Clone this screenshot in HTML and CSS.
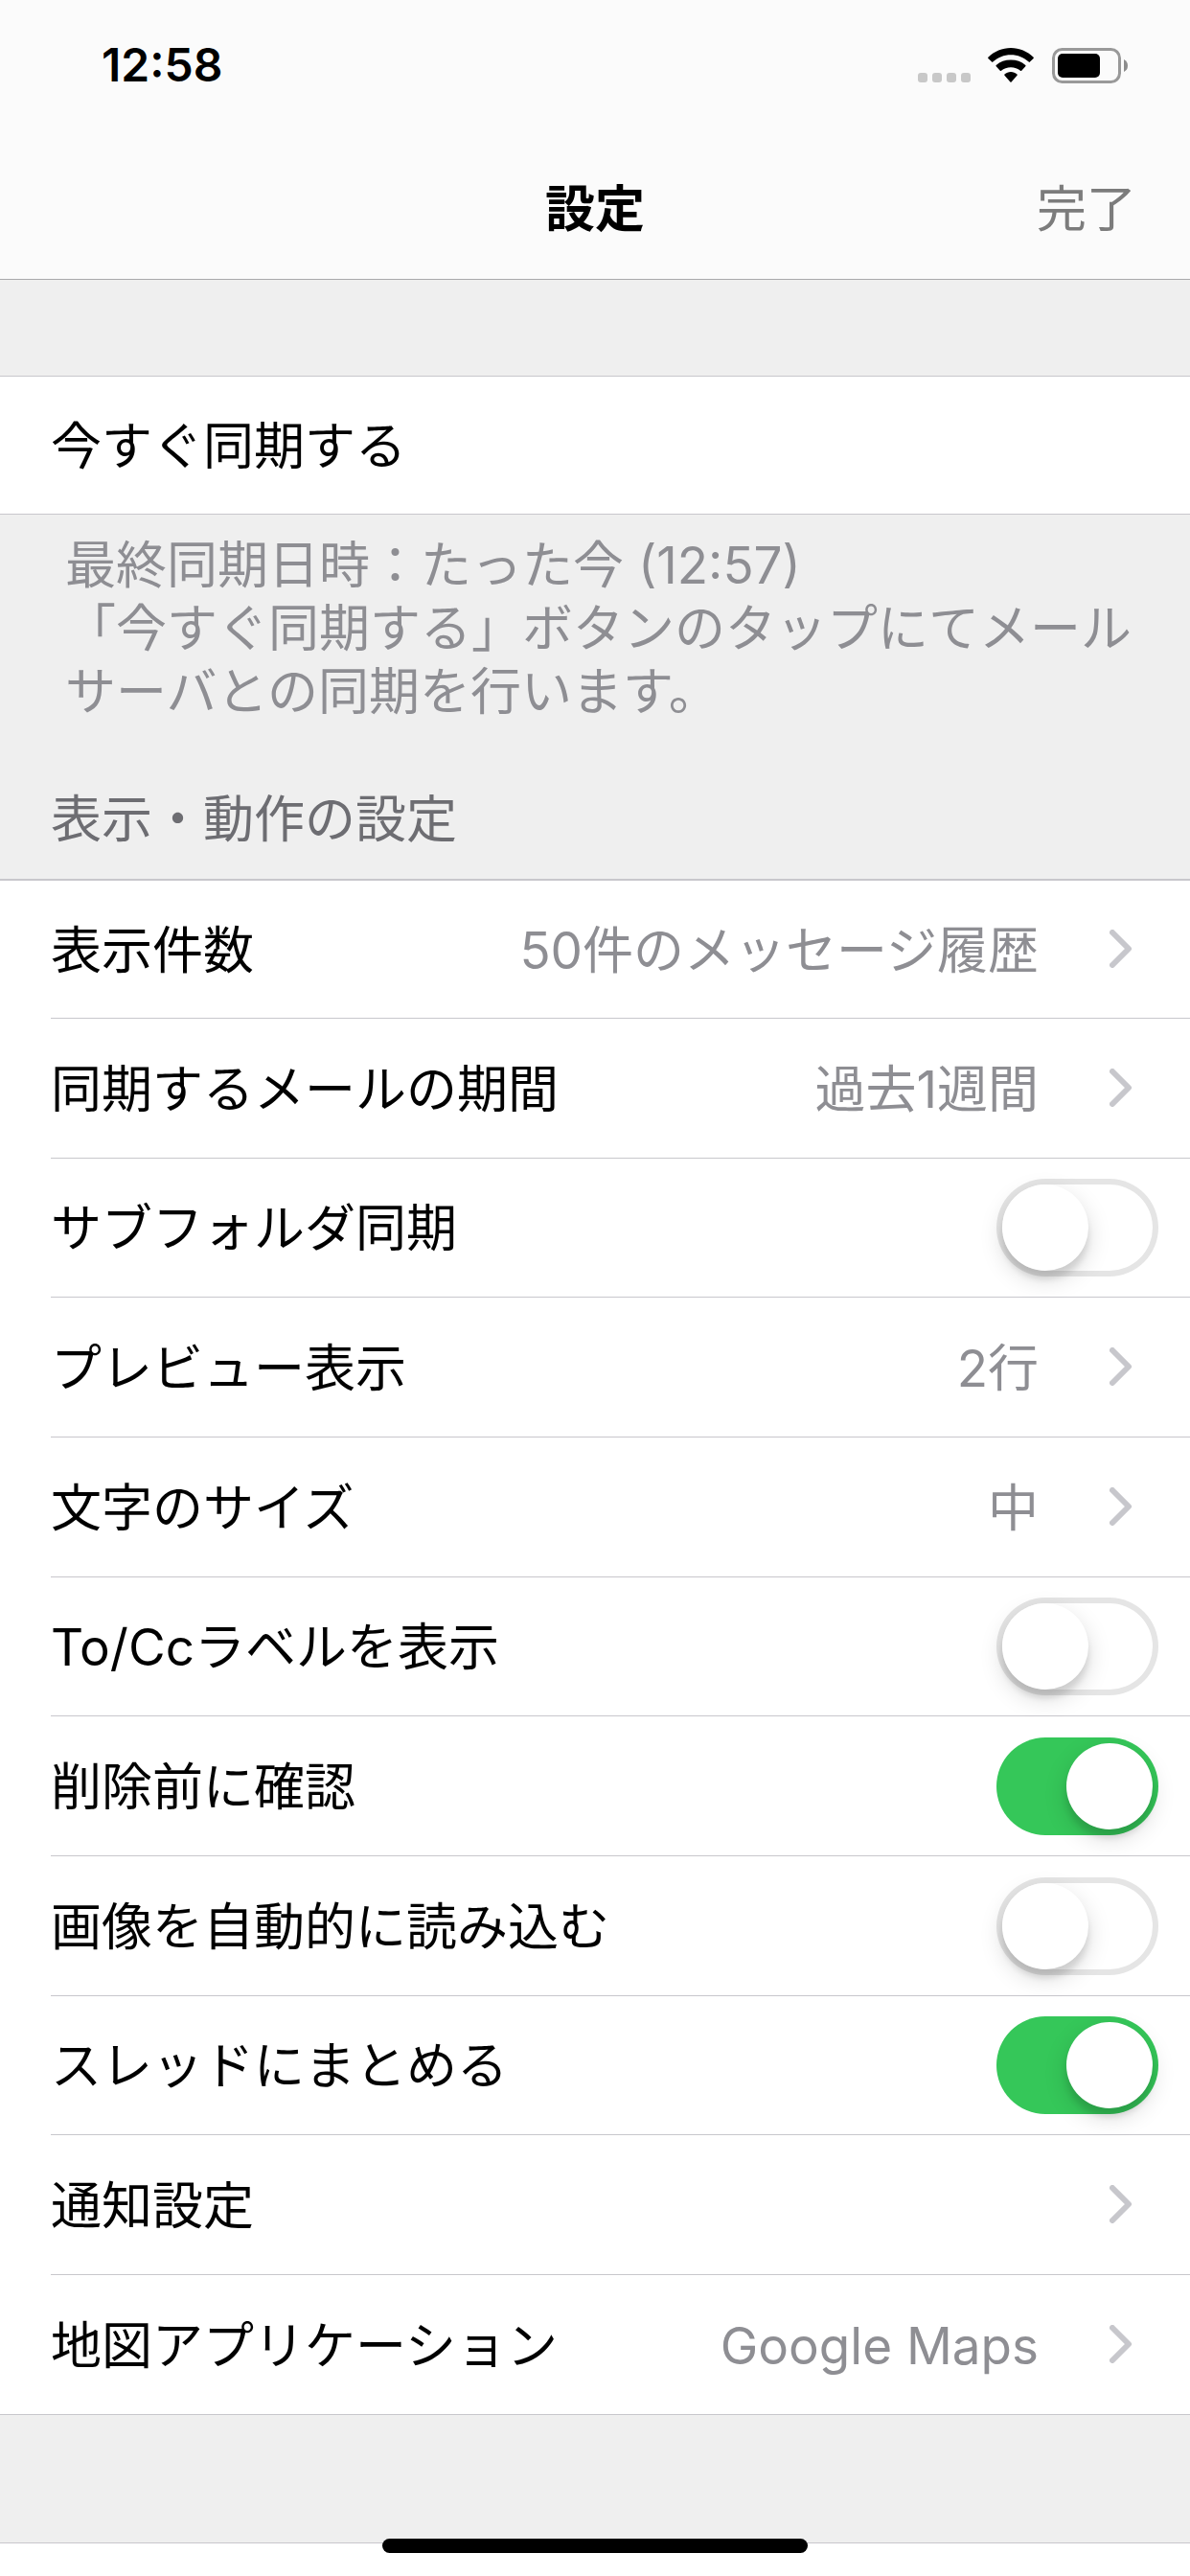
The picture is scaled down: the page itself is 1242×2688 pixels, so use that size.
FILE: index.html
```html
<!DOCTYPE html>
<html lang="ja">
<head>
    <meta charset="UTF-8">
    <meta name="viewport" content="width=device-width, initial-scale=1.0">
    <title>設定</title>
    <link rel="stylesheet" href="styles.css">
</head>
<body>

    <header class="top">
        <div class="status-bar">
            <span class="time">12:58</span>
            <div class="status-icons">
                <svg class="signal" viewBox="0 0 55 10"><rect width="10" height="10" rx="3"/><rect x="15" width="10" height="10" rx="3"/><rect x="30" width="10" height="10" rx="3"/><rect x="45" width="10" height="10" rx="3"/></svg>
                <svg class="wifi" viewBox="0 0 48 36">
                    <path d="M.4 10.9Q-.2 10.3.4 9.7C6.8 3.500 15 0 24 0s17.200 3.500 23.600 9.700q.6.600 0 1.200l-3.700 3.700q-.6.600-1.200 0C37.700 9.900 31.100 7.300 24 7.300S10.300 9.900 5.300 14.600q-.6.600-1.200 0z"/>
                    <path d="M8.700 19.200q-.6-.6 0-1.200C12.800 14.400 18.200 12.600 24 12.600s11.200 1.800 15.300 5.400q.6.600 0 1.200l-4.100 4.500q-.6.600-1.200.1C31.300 21.500 27.800 20.200 24 20.200s-7.300 1.300-10 3.600q-.6.500-1.200-.1z"/>
                    <path d="M17.500 28.700q-.6-.6 0-1.200C19.300 25.900 21.500 25 24 25s4.700.9 6.500 2.500q.6.600 0 1.200l-5.900 6.900q-.6.500-1.200 0z"/>
                </svg>
                <svg class="battery" viewBox="0 0 80 37">
                    <rect x="1.500" y="1.500" width="69" height="34" rx="9" fill="none" stroke="#999" stroke-width="3"/>
                    <rect x="6" y="6" width="44" height="25" rx="5"/>
                    <path d="M75 12q4 2 4 6.500T75 25z" fill="#8c8c8c"/>
                </svg>
            </div>
        </div>
        <div class="nav-bar">
            <h1>設定</h1>
            <button class="done" type="button">完了</button>
        </div>
    </header>

    <main>
        <section class="sync">
            <button class="sync-button" type="button">今すぐ同期する</button>
            <p class="note">最終同期日時：たった今 (12:57)<br>「今すぐ同期する」ボタンのタップにてメールサーバとの同期を行います。</p>
        </section>

        <section>
            <h2>表示・動作の設定</h2>
            <ul class="list">
                <li><a class="row" href="#count"><span>表示件数</span><span class="value">50件のメッセージ履歴</span><svg class="chevron" viewBox="0 0 24 40"><path d="M3 3l17 17L3 37"/></svg></a></li>
                <li><a class="row" href="#period"><span>同期するメールの期間</span><span class="value">過去1週間</span><svg class="chevron" viewBox="0 0 24 40"><path d="M3 3l17 17L3 37"/></svg></a></li>
                <li><label class="row"><span>サブフォルダ同期</span><input class="switch" type="checkbox"></label></li>
                <li><a class="row" href="#preview"><span>プレビュー表示</span><span class="value">2行</span><svg class="chevron" viewBox="0 0 24 40"><path d="M3 3l17 17L3 37"/></svg></a></li>
                <li><a class="row" href="#size"><span>文字のサイズ</span><span class="value">中</span><svg class="chevron" viewBox="0 0 24 40"><path d="M3 3l17 17L3 37"/></svg></a></li>
                <li><label class="row"><span>To/Ccラベルを表示</span><input class="switch" type="checkbox"></label></li>
                <li><label class="row"><span>削除前に確認</span><input class="switch" type="checkbox" checked></label></li>
                <li><label class="row"><span>画像を自動的に読み込む</span><input class="switch" type="checkbox"></label></li>
                <li><label class="row"><span>スレッドにまとめる</span><input class="switch" type="checkbox" checked></label></li>
                <li><a class="row" href="#notifications"><span>通知設定</span><svg class="chevron" viewBox="0 0 24 40"><path d="M3 3l17 17L3 37"/></svg></a></li>
                <li><a class="row" href="#maps"><span>地図アプリケーション</span><span class="value">Google Maps</span><svg class="chevron" viewBox="0 0 24 40"><path d="M3 3l17 17L3 37"/></svg></a></li>
            </ul>
        </section>

        <section class="next-section"></section>
    </main>

    <div class="home-indicator"></div>

</body>
</html>
```

FILE: styles.css
```css
:root {
    --bg: #efefef;
    --line: #c8c7cc;
    --gray: #8e8e93;
    --green: #35c759;
}

* { box-sizing: border-box; }

body {
    margin: 0;
    min-height: 100vh;
    display: flex;
    flex-direction: column;
    background: var(--bg);
    color: #000;
    font-family: Inter, "Noto Sans CJK JP", sans-serif;
    font-size: 53px;
    font-weight: 400;
    line-height: 66px;
}

button {
    font: inherit;
    color: inherit;
    background: none;
    border: 0;
    padding: 0;
    cursor: pointer;
}

/* ---- header ---- */
.top {
    background: #fbfbfb;
    border-bottom: 1px solid #a9a9ab;
}

.status-bar {
    height: 144px;
    padding: 0 64px 8px 106px;
    display: flex;
    justify-content: space-between;
    align-items: center;
}
.time { font-size: 48px; font-weight: 600; }
.status-icons { display: flex; align-items: center; }
.status-icons svg { display: block; }
.signal { width: 55px; height: 10px; margin: 26px 18px 0 0; fill: #c8c8c8; }
.wifi { width: 48px; height: 36px; margin-right: 19px; }
.battery { width: 80px; height: 37px; }

.nav-bar {
    height: 147px;
    padding: 2px 56px 0;
    display: grid;
    grid-template-columns: 1fr auto 1fr;
    align-items: center;
}
.nav-bar h1 { grid-column: 2; margin: 0; font-size: 52px; font-weight: 700; }
.done { justify-self: end; font-size: 52px; color: #7c7c7c; }

/* ---- body ---- */
main { flex: 1; display: flex; flex-direction: column; }

.sync { padding-top: 100px; }
.sync-button {
    display: block;
    width: 100%;
    height: 145px;
    padding: 2px 0 0 53px;
    background: #fff;
    border-top: 1px solid var(--line);
    border-bottom: 1px solid var(--line);
    text-align: left;
}

.note { margin: 0; padding: 20px 53px 0 68px; color: var(--gray); }

h2 {
    margin: 67px 0 29px;
    padding: 0 53px;
    font-size: inherit;
    font-weight: inherit;
    color: #6d6d72;
}

.list {
    margin: 0;
    padding: 0;
    list-style: none;
    background: #fff;
    border-top: 2px solid var(--line);
    border-bottom: 1px solid var(--line);
}
.list li { height: 146px; padding-left: 53px; }
.list li:first-child { height: 144px; }
.list li:nth-child(3n), .list li:last-child { height: 145px; }

.row {
    height: 100%;
    padding-right: 33px;
    display: flex;
    align-items: center;
    justify-content: space-between;
    border-bottom: 1px solid var(--line);
    color: inherit;
    text-decoration: none;
}
.row span { padding-top: 2px; }
.list li:last-child .row { border-bottom: 0; }

.value { margin-left: auto; color: var(--gray); }

.chevron {
    width: 24px;
    height: 40px;
    margin: 0 27px 2px 74px;
    fill: none;
    stroke: #c7c7cc;
    stroke-width: 6;
    stroke-linecap: round;
    stroke-linejoin: round;
}

.switch {
    appearance: none;
    width: 169px;
    height: 102px;
    margin: 0;
    padding: 6px;
    border-radius: 51px;
    background: #fff;
    box-shadow: inset 0 0 0 6px #e5e5e5;
    cursor: pointer;
}
.switch::before {
    content: "";
    display: block;
    width: 90px;
    height: 90px;
    border-radius: 50%;
    background: #fff;
    box-shadow: 0 9px 24px rgba(0,0,0,0.15), 0 9px 6px rgba(0,0,0,0.1);
}
.switch:checked { background: var(--green); box-shadow: none; }
.switch:checked::before { margin-left: 67px; }

.next-section {
    flex: 1;
    min-height: 34px;
    margin-top: 133px;
    background: #fff;
    border-top: 1px solid var(--line);
}

.home-indicator {
    position: fixed;
    left: 50%;
    bottom: 24px;
    width: 444px;
    height: 15px;
    margin-left: -222px;
    border-radius: 8px;
    background: #000;
}
```
